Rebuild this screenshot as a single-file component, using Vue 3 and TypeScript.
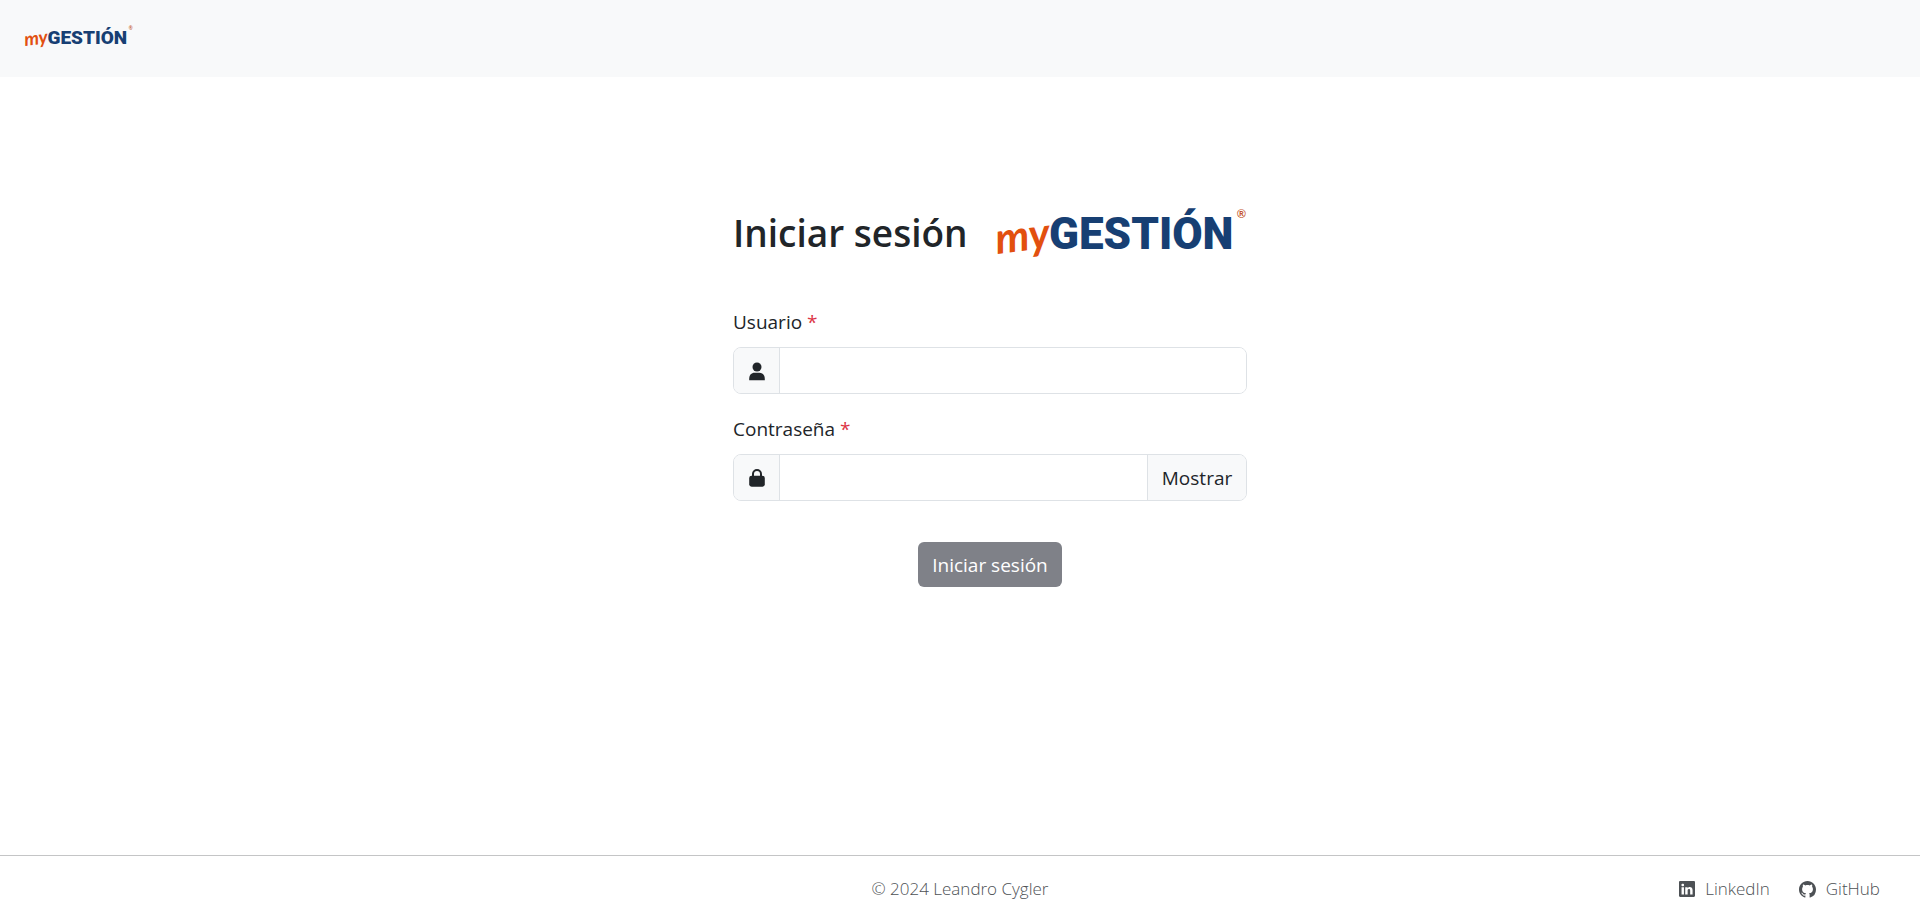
<script setup lang="ts">
import { computed, defineComponent, h, ref } from 'vue'

const user = ref('')
const password = ref('')
const visible = ref(false)
const canSubmit = computed(() => user.value !== '' && password.value !== '')

const BrandLogo = defineComponent({
  name: 'BrandLogo',
  setup() {
    return () =>
      h('svg', { class: 'brand-logo', viewBox: '0 0 250 67', role: 'img', 'aria-label': 'myGESTIÓN' }, [
        h('text', { class: 'brand-my', x: 0, y: 51, transform: 'rotate(-7 0 51)' }, 'my'),
        h('text', { class: 'brand-name', x: 52, y: 46 }, 'GESTIÓN'),
        h('text', { class: 'brand-mark', x: 240, y: 15 }, '®'),
      ])
  },
})
</script>

<template>
  <div class="page">
    <header class="topbar">
      <a href="#" class="home"><BrandLogo /></a>
    </header>

    <main class="content">
      <form class="login" @submit.prevent>
        <div class="heading">
          <h1>Iniciar sesión</h1>
          <BrandLogo />
        </div>

        <div class="field">
          <label for="user">Usuario <span class="required">*</span></label>
          <div class="group">
            <span class="addon">
              <svg viewBox="0 0 20 20" aria-hidden="true">
                <circle cx="10" cy="6" r="4.5" />
                <path d="M2.2 19.3v-1.5c0-3.8 2.2-6 5.4-6h4.8c3.2 0 5.4 2.2 5.4 6v1.5z" />
              </svg>
            </span>
            <input id="user" v-model="user" type="text" autocomplete="username" />
          </div>
        </div>

        <div class="field">
          <label for="password">Contraseña <span class="required">*</span></label>
          <div class="group">
            <span class="addon">
              <svg viewBox="0 0 20 20" aria-hidden="true">
                <rect x="2.2" y="7.7" width="15.6" height="11" rx="2.4" />
                <path class="shackle" d="M6 8.5V6a4 4 0 0 1 8 0v2.5" />
              </svg>
            </span>
            <input id="password" v-model="password" :type="visible ? 'text' : 'password'" autocomplete="current-password" />
            <button type="button" class="toggle" @click="visible = !visible">{{ visible ? 'Ocultar' : 'Mostrar' }}</button>
          </div>
        </div>

        <button type="submit" class="submit" :disabled="!canSubmit">Iniciar sesión</button>
      </form>
    </main>

    <footer class="footer">
      <p>© 2024 Leandro Cygler</p>
      <nav>
        <a href="#linkedin">
          <svg viewBox="0 0 16 16" aria-hidden="true">
            <path d="M0 1.146C0 .513.526 0 1.175 0h13.65C15.474 0 16 .513 16 1.146v13.708c0 .633-.526 1.146-1.175 1.146H1.175C.526 16 0 15.487 0 14.854zm4.943 12.248V6.169H2.542v7.225zm-1.2-8.212c.837 0 1.358-.554 1.358-1.248-.015-.709-.52-1.248-1.342-1.248S2.4 3.226 2.4 3.934c0 .694.521 1.248 1.327 1.248zm4.908 8.212V9.359c0-.216.016-.432.08-.586.173-.431.568-.878 1.232-.878.869 0 1.216.662 1.216 1.634v3.865h2.401V9.25c0-2.22-1.184-3.252-2.764-3.252-1.274 0-1.845.7-2.165 1.193v.025h-.016l.016-.025V6.169h-2.4c.03.678 0 7.225 0 7.225z" />
          </svg>
          LinkedIn
        </a>
        <a href="#github">
          <svg class="github" viewBox="0 0 16 16" aria-hidden="true">
            <path d="M8 0C3.58 0 0 3.58 0 8c0 3.54 2.29 6.53 5.47 7.59.4.07.55-.17.55-.38 0-.19-.01-.82-.01-1.49-2.01.37-2.53-.49-2.69-.94-.09-.23-.48-.94-.82-1.13-.28-.15-.68-.52-.01-.53.63-.01 1.08.58 1.23.82.72 1.21 1.87.87 2.33.66.07-.52.28-.87.51-1.07-1.78-.2-3.64-.89-3.64-3.95 0-.87.31-1.59.82-2.15-.08-.2-.36-1.02.08-2.12 0 0 .67-.21 2.2.82.64-.18 1.32-.27 2-.27s1.36.09 2 .27c1.53-1.04 2.2-.82 2.2-.82.44 1.1.16 1.92.08 2.12.51.56.82 1.27.82 2.15 0 3.07-1.87 3.75-3.65 3.95.29.25.54.73.54 1.48 0 1.07-.01 1.93-.01 2.2 0 .21.15.46.55.38A8.01 8.01 0 0 0 16 8c0-4.42-3.58-8-8-8" />
          </svg>
          GitHub
        </a>
      </nav>
    </footer>
  </div>
</template>

<style>
body {
  margin: 0;
}
</style>

<style scoped>
.page {
  min-height: 100vh;
  display: flex;
  flex-direction: column;
  background: #fff;
  color: #212529;
  font: 400 19px/30px "Segoe UI", "Open Sans", "Noto Sans", sans-serif;
}
.page * {
  box-sizing: border-box;
}
.topbar {
  display: flex;
  align-items: center;
  height: 77px;
  padding: 0 25px;
  background: #f8f9fa;
}
.home {
  display: flex;
  width: 108px;
}
.brand-logo {
  display: block;
  width: 100%;
  overflow: visible;
}
.page :deep(.brand-my) {
  font: italic 700 43px Lato, sans-serif;
  fill: #e2500f;
}
.page :deep(.brand-name) {
  font: 900 44px Roboto, sans-serif;
  fill: #173f73;
}
.page :deep(.brand-mark) {
  font: 700 12px "Liberation Sans", sans-serif;
  fill: #c4552c;
}
.content {
  flex: 1;
  display: flex;
  justify-content: center;
  padding: 126px 0 40px 60px;
}
.login {
  display: flex;
  flex-direction: column;
  gap: 20px;
  width: 100%;
  max-width: 514px;
}
.heading {
  display: flex;
  align-items: center;
  justify-content: space-between;
  margin-bottom: 17px;
}
.heading .brand-logo {
  width: 250px;
}
h1 {
  margin: 0 0 8px;
  font-size: 37px;
  line-height: 48px;
  font-weight: 600;
  white-space: nowrap;
}
.field {
  display: flex;
  flex-direction: column;
  gap: 10px;
}
.required {
  color: #dc3545;
}
.group {
  display: flex;
  height: 47px;
  border: 1px solid #dee2e6;
  border-radius: 8px;
  overflow: hidden;
}
.addon {
  display: flex;
  align-items: center;
  justify-content: center;
  width: 46px;
  background: #f8f9fa;
  border-right: 1px solid #dee2e6;
}
.addon svg {
  width: 20px;
  height: 20px;
  fill: #212529;
}
.addon .shackle {
  fill: none;
  stroke: #212529;
  stroke-width: 2;
}
input {
  flex: 1;
  min-width: 0;
  padding: 0 15px;
  border: 0;
  outline: 0;
  background: #fff;
  color: inherit;
  font: inherit;
}
button {
  font: inherit;
  cursor: pointer;
}
.toggle {
  width: 99px;
  padding: 0;
  border: 0;
  border-left: 1px solid #dee2e6;
  background: #f8f9fa;
  color: inherit;
}
.submit {
  align-self: center;
  width: 144px;
  height: 45px;
  margin-top: 21px;
  padding: 0;
  border: 0;
  border-radius: 6px;
  background: #424649;
  color: #fff;
}
.submit:disabled {
  background: #7f8188;
}
.footer {
  display: grid;
  grid-template-columns: 1fr auto 1fr;
  align-items: center;
  height: 67px;
  padding: 0 40px;
  border-top: 1px solid #c4c5c6;
  color: #4d5155;
  font-size: 17px;
  font-weight: 300;
}
.footer p {
  grid-column: 2;
  margin: 0;
}
nav {
  display: flex;
  justify-content: flex-end;
  gap: 29px;
}
nav a {
  display: flex;
  align-items: center;
  gap: 10px;
  color: inherit;
  text-decoration: none;
}
nav svg {
  width: 16px;
  height: 16px;
  fill: currentColor;
}
nav .github {
  width: 17px;
  height: 17px;
}
</style>
